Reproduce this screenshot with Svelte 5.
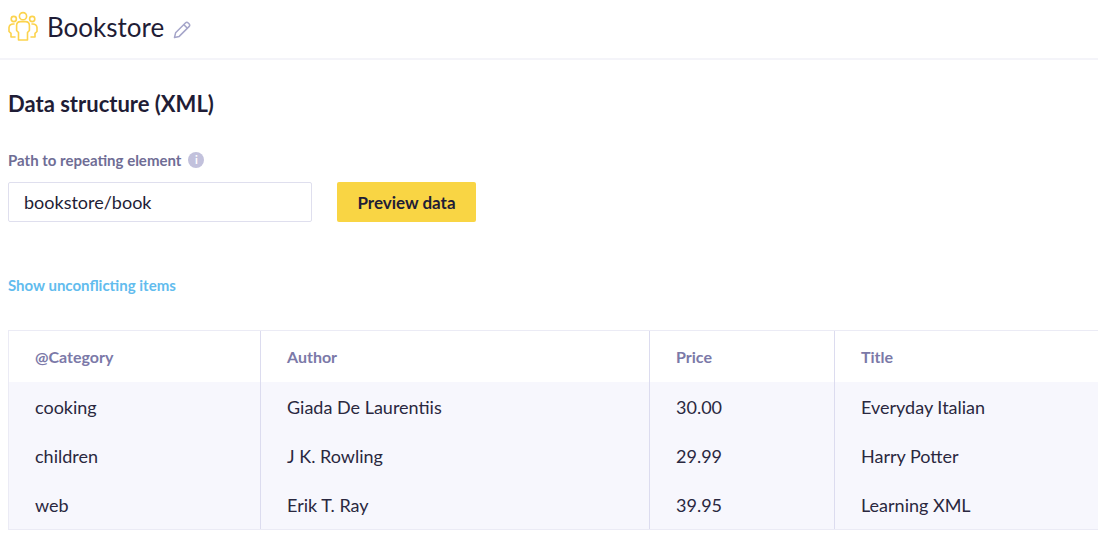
<script>
  const cols = ['@Category', 'Author', 'Price', 'Title'];
  const rows = [
    ['cooking', 'Giada De Laurentiis', '30.00', 'Everyday Italian'],
    ['children', 'J K. Rowling', '29.99', 'Harry Potter'],
    ['web', 'Erik T. Ray', '39.95', 'Learning XML']
  ];
</script>

<div class="page">
  <header class="top">
    <svg class="logo" width="30" height="30" viewBox="0 0 30 30" fill="none" stroke="#fcd34d" stroke-width="1.6" stroke-linecap="round" stroke-linejoin="round">
      <circle cx="15" cy="5.2" r="3.6"/>
      <circle cx="5.8" cy="8" r="2.6"/>
      <circle cx="24.2" cy="8" r="2.6"/>
      <path d="M10.5 29V21.5L8.6 19.5V14.5C8.6 12 10.5 10.6 12.5 10.6H17.5C19.5 10.6 21.4 12 21.4 14.5V19.5L19.5 21.5V29H10.5Z"/>
      <path d="M6 13C3.5 12.8 1.4 14 1 16.5V20.5L3 22.3V26H7"/>
      <path d="M24 13C26.5 12.8 28.6 14 29 16.5V20.5L27 22.3V26H23"/>
    </svg>
    <h1>Bookstore</h1>
    <svg class="pencil" width="18" height="18" viewBox="0 0 18 18" fill="none" stroke="#a5a5c9" stroke-width="1.5" stroke-linejoin="round">
      <path d="M1.5 16.5L2.6 11.8L12.4 2C13.2 1.2 14.4 1.2 15.2 2L16 2.8C16.8 3.6 16.8 4.8 16 5.6L6.2 15.4L1.5 16.5Z"/>
      <path d="M10.8 3.6L14.4 7.2"/>
    </svg>
  </header>

  <main class="body">
    <h2>Data structure (XML)</h2>
    <div class="label">
      <span>Path to repeating element</span>
      <span class="info">i</span>
    </div>
    <div class="controls">
      <input class="path" value="bookstore/book" />
      <button class="preview">Preview data</button>
    </div>
    <a class="link" href="#top">Show unconflicting items</a>

    <div class="table">
      {#each cols as c}
        <div class="cell head">{c}</div>
      {/each}
      {#each rows as r}
        {#each r as v}
          <div class="cell data">{v}</div>
        {/each}
      {/each}
    </div>
  </main>
</div>

<style>
  :global(body) {
    margin: 0;
    background: #fff;
  }
  .page {
    width: 1098px;
    height: 550px;
    overflow: hidden;
    font-family: Lato, "Liberation Sans", sans-serif;
    color: #1f1d36;
  }
  .top {
    height: 58px;
    display: flex;
    align-items: center;
    padding-left: 8px;
    border-bottom: 2px solid #f4f4f9;
    box-sizing: content-box;
  }
  .logo {
    margin-top: -6px;
  }
  h1 {
    margin: 0 0 0 9px;
    font-size: 26px;
    font-weight: 400;
    line-height: 32px;
    margin-top: -4px;
  }
  .pencil {
    margin-left: 9px;
    margin-top: 2px;
  }
  .body {
    padding: 0 0 0 8px;
  }
  h2 {
    margin: 29px 0 0;
    font-size: 22px;
    line-height: 30px;
    font-weight: 700;
  }
  .label {
    margin-top: 31px;
    display: flex;
    align-items: center;
    gap: 7px;
    font-size: 15px;
    line-height: 20px;
    font-weight: 700;
    color: #6f6d95;
  }
  .info {
    width: 16px;
    height: 16px;
    border-radius: 50%;
    background: #c2c1dc;
    color: #fff;
    font-size: 11px;
    line-height: 16px;
    text-align: center;
  }
  .controls {
    margin-top: 12px;
    display: flex;
    gap: 25px;
  }
  .path {
    width: 304px;
    height: 40px;
    box-sizing: border-box;
    border: 1px solid #dfdfee;
    border-radius: 2px;
    padding: 0 15px;
    font: 400 18px Lato, sans-serif;
    color: #1f1d36;
    outline: none;
    background: #fff;
  }
  .preview {
    width: 139px;
    height: 40px;
    border: 0;
    border-radius: 2px;
    background: #f9d544;
    font: 700 17px Lato, sans-serif;
    color: #1f1d36;
    padding: 0;
  }
  .link {
    display: block;
    margin-top: 53px;
    font-size: 15px;
    line-height: 20px;
    font-weight: 700;
    color: #62bcee;
    text-decoration: none;
  }
  .table {
    margin-top: 35px;
    display: grid;
    grid-template-columns: 252px 389px 185px 264px;
    grid-template-rows: 51px 49px 49px 49px;
    width: 1090px;
    border: 1px solid #ebebf5;
    border-right: 0;
    box-sizing: content-box;
  }
  .cell {
    padding-left: 26px;
    display: flex;
    align-items: center;
    box-sizing: border-box;
    border-right: 1px solid #dcdcef;
    white-space: nowrap;
  }
  .cell:nth-child(4n) {
    border-right: 0;
  }
  .head {
    font-size: 16px;
    font-weight: 700;
    color: #7b79a8;
    background: #fff;
  }
  .data {
    font-size: 18px;
    color: #2a2840;
    background: #f7f7fd;
  }
</style>
